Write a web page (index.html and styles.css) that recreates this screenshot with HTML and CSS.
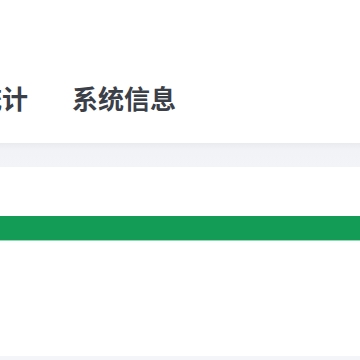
FILE: index.html
```html
<!DOCTYPE html>
<html lang="zh">
<head>
<meta charset="utf-8">
<link rel="stylesheet" href="styles.css">
</head>
<body>
<div class="page">
  <nav class="tabs">
    <span class="tab">数据统计</span>
    <span class="tab">系统信息</span>
  </nav>
  <div class="band"></div>
  <div class="spacer"></div>
  <div class="progress"><div class="progress-fill"></div></div>
  <div class="content"></div>
  <div class="footer-band"></div>
</div>
</body>
</html>
```

FILE: styles.css
```css
html, body {
  margin: 0;
  padding: 0;
  background: #ffffff;
}
.page {
  width: 360px;
  height: 360px;
  overflow: hidden;
  display: flex;
  flex-direction: column;
  font-family: "Noto Sans CJK SC", "Noto Sans", sans-serif;
}
.tabs {
  display: flex;
  gap: 44px;
  height: 143px;
  align-items: flex-start;
  padding-top: 80px;
  box-sizing: border-box;
  margin-left: -76px;
  white-space: nowrap;
}
.tab {
  font-size: 26px;
  line-height: 36px;
  font-weight: 700;
  color: #3b4048;
}
.band {
  height: 24px;
  background: linear-gradient(#e9ebef, #f1f3f7 30%, #f2f4f8);
}
.spacer {
  height: 49px;
}
.progress {
  height: 26px;
  display: flex;
  flex-direction: column;
}
.progress-fill {
  height: 24px;
  background: #139c55;
  border-bottom: 1px solid #8fd9b4;
}
.content {
  flex: 1;
}
.footer-band {
  height: 4px;
  background: #f3f5f8;
}
```
